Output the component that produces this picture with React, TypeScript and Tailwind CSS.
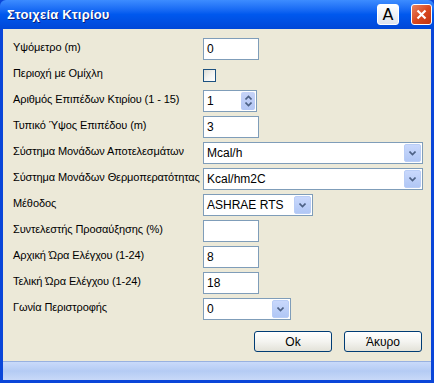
import React from "react";

type Row =
  | { label: string; kind: "text"; value: string }
  | { label: string; kind: "check" }
  | { label: string; kind: "spin"; value: string }
  | { label: string; kind: "select"; value: string; width: string };

const rows: Row[] = [
  { label: "Υψόμετρο (m)", kind: "text", value: "0" },
  { label: "Περιοχή με Ομίχλη", kind: "check" },
  { label: "Αριθμός Επιπέδων Κτιρίου (1 - 15)", kind: "spin", value: "1" },
  { label: "Τυπικό Ύψος Επιπέδου (m)", kind: "text", value: "3" },
  { label: "Σύστημα Μονάδων Αποτελεσμάτων", kind: "select", value: "Mcal/h", width: "w-[220px]" },
  { label: "Σύστημα Μονάδων Θερμοπερατότητας", kind: "select", value: "Kcal/hm2C", width: "w-[220px]" },
  { label: "Μέθοδος", kind: "select", value: "ASHRAE RTS", width: "w-[110px]" },
  { label: "Συντελεστής Προσαύξησης (%)", kind: "text", value: "" },
  { label: "Αρχική Ώρα Ελέγχου (1-24)", kind: "text", value: "8" },
  { label: "Τελική Ώρα Ελέγχου (1-24)", kind: "text", value: "18" },
  { label: "Γωνία Περιστροφής", kind: "select", value: "0", width: "w-[88px]" },
];

function ArrowBox({ up }: { up?: boolean }) {
  return (
    <svg width="7" height="5" viewBox="0 0 7 5" className={up ? "rotate-180" : ""}>
      <path d="M0.5 0.5 L3.5 3.5 L6.5 0.5" fill="none" stroke="#4d6185" strokeWidth="1.6" />
    </svg>
  );
}

function Field({ row }: { row: Row }) {
  if (row.kind === "check") {
    return (
      <div className="h-[22px] flex items-center">
        <div className="w-[13px] h-[13px] border border-[#1c5180] bg-gradient-to-br from-[#dcdcd5] via-[#f2f2ef] to-[#ffffff]" />
      </div>
    );
  }
  if (row.kind === "text") {
    return (
      <div className="w-[56px] h-[22px] border border-[#7f9db9] bg-white flex items-center pl-[3px] text-[12px] text-black">
        {row.value}
      </div>
    );
  }
  if (row.kind === "spin") {
    return (
      <div className="w-[54px] h-[22px] border border-[#7f9db9] bg-white flex items-center pl-[3px] pr-[1px] text-[12px] text-black">
        <span className="flex-1">{row.value}</span>
        <div className="w-[14px] h-[18px] rounded-[2px] bg-gradient-to-b from-[#c6d3f7] to-[#b3c6f4] flex flex-col items-center justify-center gap-[2px]">
          <ArrowBox up />
          <ArrowBox />
        </div>
      </div>
    );
  }
  return (
    <div className={`${row.width} h-[22px] border border-[#7f9db9] bg-white flex items-center pl-[3px] pr-[1px] text-[12px] text-black`}>
      <span className="flex-1">{row.value}</span>
      <div className="w-[17px] h-[18px] rounded-[2px] border border-[#b9cdf6] bg-gradient-to-b from-[#c9d8fc] to-[#b1c7f5] flex items-center justify-center">
        <ArrowBox />
      </div>
    </div>
  );
}

export default function App() {
  return (
    <div className="w-[434px] h-[383px] flex flex-col bg-[#0a46d9] font-['Liberation_Sans',Arial,sans-serif] overflow-hidden">
      <div className="h-[29px] shrink-0 flex items-center pl-[7px] pr-[2px] bg-gradient-to-b from-[#3d8cff] via-[#0058ee] to-[#0047d8] rounded-t-[6px]">
        <span className="flex-1 text-white font-bold text-[13px] tracking-[0.2px] [text-shadow:1px_1px_0_#0a1e7a]">
          Στοιχεία Κτιρίου
        </span>
        <div className="w-[22px] h-[21px] mr-[12px] rounded-[3px] border border-white bg-gradient-to-b from-white to-[#dde3ee] flex items-center justify-center text-[16px] text-black font-['DejaVu_Sans',sans-serif] leading-none">
          A
        </div>
        <div className="w-[21px] h-[21px] rounded-[3px] border border-white bg-gradient-to-br from-[#e9825f] via-[#d9491f] to-[#c3330f] flex items-center justify-center">
          <svg width="11" height="11" viewBox="0 0 11 11">
            <path d="M1.5 1.5 L9.5 9.5 M9.5 1.5 L1.5 9.5" stroke="white" strokeWidth="2.2" />
          </svg>
        </div>
      </div>
      <div className="flex-1 mx-[3px] bg-[#ece9d8] flex flex-col pt-[9px] pl-[10px] pr-[9px]">
        <div className="flex flex-col gap-[4px]">
          {rows.map((row) => (
            <div key={row.label} className="grid grid-cols-[190px_1fr] h-[22px]">
              <span className="text-[11px] leading-[14px] pt-[2px] text-black whitespace-nowrap tracking-[-0.1px]">{row.label}</span>
              <Field row={row} />
            </div>
          ))}
        </div>
        <div className="flex justify-end gap-[12px] mt-[11px]">
          <button className="w-[78px] h-[21px] rounded-[3px] border border-[#003c74] bg-gradient-to-b from-white via-[#f4f4f0] to-[#e3e2d8] text-[12px] text-black">
            Ok
          </button>
          <button className="w-[78px] h-[21px] rounded-[3px] border border-[#003c74] bg-gradient-to-b from-white via-[#f4f4f0] to-[#e3e2d8] text-[12px] text-black">
            Άκυρο
          </button>
        </div>
      </div>
      <div className="h-[19px] mx-[3px] border-t border-[#98b1e0] bg-gradient-to-b from-[#c9dafa] via-[#b4cbf4] to-[#c8d9f8]" />
      <div className="h-[3px]" />
    </div>
  );
}
